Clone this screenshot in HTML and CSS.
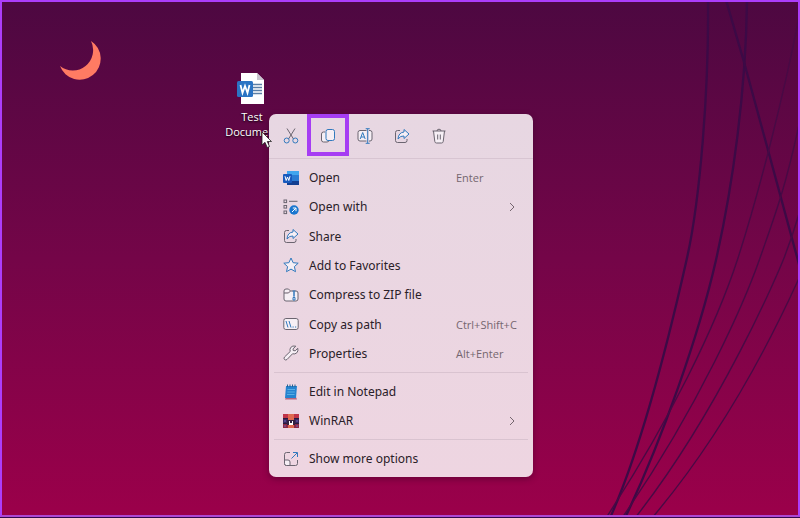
FILE: index.html
```
<!DOCTYPE html>
<html lang="en">

<head>
    <meta charset="UTF-8">
    <meta name="viewport" content="width=device-width, initial-scale=1.0">
    <title>Desktop</title>
    <link rel="stylesheet" href="styles.css">
</head>

<body>
    <main class="desktop">
        <svg class="wallpaper" viewBox="0 0 800 518" preserveAspectRatio="xMaxYMin slice" aria-hidden="true">
            <g fill="none" stroke="#3c0a46" stroke-width="2.300">
                <path d="M708 0C709 90 700 200 687 258S645 440 610 518" />
                <path d="M747 0C746 90 733 185 716 260S662 440 625 518" />
                <path d="M726 0L744 62L768 150L800 268" />
            </g>
            <g fill="none" stroke="#480a45" stroke-width="1.400">
                <path d="M800 12C785 90 760 190 738 258S670 420 606 518" />
                <path d="M800 120C785 190 775 215 760 258S700 405 622 518" />
                <path d="M800 210C793 235 789 245 784 258S720 410 635 518" />
                <path d="M800 276Q735 420 652 518" />
            </g>
        </svg>
        <svg class="moon" viewBox="59 40 43 41" aria-hidden="true">
            <path d="M91 41A21 21 0 1 1 60 66A20.4 20.4 0 0 0 91 41Z" fill="#ff7b63" />
        </svg>

        <button class="file">
            <svg width="32" height="34" viewBox="0 0 32 34" aria-hidden="true">
                <path d="M5 1H21L28 8V32H5Z" fill="#fff" />
                <path d="M21 1V8H28Z" fill="#c9c5cf" />
                <path d="M17 12.500H26M17 15.500H26M17 18.500H26M17 21.500H26" stroke="#5b7fa6" stroke-width="1.300" />
                <rect x="1" y="9" width="16" height="16" rx="1.500" fill="#2b74c4" />
                <path d="M4.500 13L6.500 21L9 14L11.500 21L13.500 13" fill="none" stroke="#fff" stroke-width="1.800" />
            </svg>
            <span>Test Document</span>
        </button>

        <div class="menu" role="menu">
            <div class="toolbar">
                <button aria-label="Cut">
                    <svg viewBox="0 0 16 16">
                        <path class="grey" d="M4 .5L10.500 11M12 .5L5.500 11" />
                        <circle class="blue" cx="3.700" cy="12.500" r="2.500" />
                        <circle class="blue" cx="12.300" cy="12.500" r="2.500" />
                    </svg>
                </button>
                <button class="marked" aria-label="Copy">
                    <svg viewBox="0 0 16 16">
                        <path class="grey fill" d="M5 4H3.500Q1.500 4 1.500 6V12Q1.500 14 3.500 14H7Q9 14 9.500 12" />
                        <rect class="blue fill" x="6" y="1.500" width="8.500" height="11" rx="2" />
                    </svg>
                    <span class="mark"></span>
                </button>
                <button aria-label="Rename">
                    <svg viewBox="0 0 16 16">
                        <path class="grey fill" d="M9.500 2.500H3Q1 2.500 1 4.500V11Q1 13 3 13H9.500M12 2.500H13Q15 2.500 15 4.500V11Q15 13 13 13H12" />
                        <path class="blue" d="M3.200 11L5.700 4.500L8.200 11M4 9H7.400M10.700 1V15M8.700 .7H12.700M8.700 15.300H12.700" />
                    </svg>
                </button>
                <button aria-label="Share">
                    <svg viewBox="0 0 16 16">
                        <path class="grey" d="M6 2.500H3.500Q1.500 2.500 1.500 4.500V12.500Q1.500 14.500 3.500 14.500H11Q13 14.500 13 12.500V11" />
                        <path class="blue fill" d="M10 1.500L15 6L10 10.500V8Q6.500 7.500 4 11Q4.500 4.500 10 4Z" />
                    </svg>
                </button>
                <button aria-label="Delete">
                    <svg viewBox="0 0 16 16">
                        <path class="grey fill" d="M2.500 3L3.800 13.500Q4 15 5.500 15H10.500Q12 15 12.200 13.500L13.500 3" />
                        <path class="grey" d="M1.500 3H14.500M6 3Q6 1.200 8 1.200T10 3M6.700 6.500V11.500M9.300 6.500V11.500" />
                    </svg>
                </button>
            </div>

            <div class="group group-main">
                <button class="item" role="menuitem">
                    <svg viewBox="0 0 16 16">
                        <rect x="4" y="1" width="12" height="14" rx="1" fill="#2b7cd3" />
                        <path d="M4 1H16V5H4Z" fill="#41a5ee" />
                        <path d="M4 11H16V15H4Z" fill="#123f91" />
                        <rect y="4" width="9" height="9" rx="1" fill="#185abd" />
                        <path d="M2 6.200L3.200 10.500L4.500 7L5.800 10.500L7 6.200" fill="none" stroke="#fff" />
                    </svg>
                    <span>Open</span>
                    <kbd>Enter</kbd>
                </button>
                <button class="item" role="menuitem">
                    <svg viewBox="0 0 16 16">
                        <g class="grey">
                            <rect x="1" y="1" width="2.600" height="2.600" />
                            <rect x="1" y="6.500" width="2.600" height="2.600" />
                            <rect x="1" y="12" width="2.600" height="2.600" />
                            <path d="M6 2.300H14.500" />
                        </g>
                        <circle cx="11" cy="11" r="4.700" fill="#1976cf" />
                        <path d="M9 13L12.800 9.200M9.800 9H13V12.200" fill="none" stroke="#fff" />
                    </svg>
                    <span>Open with</span>
                    <svg class="chevron" viewBox="0 0 12 12"><path d="M4 2L8 6L4 10" /></svg>
                </button>
                <button class="item" role="menuitem">
                    <svg viewBox="0 0 16 16">
                        <path class="grey" d="M6 2.500H3.500Q1.500 2.500 1.500 4.500V12.500Q1.500 14.500 3.500 14.500H11Q13 14.500 13 12.500V11" />
                        <path class="blue fill" d="M10 1.500L15 6L10 10.500V8Q6.500 7.500 4 11Q4.500 4.500 10 4Z" />
                    </svg>
                    <span>Share</span>
                </button>
                <button class="item" role="menuitem">
                    <svg viewBox="0 0 16 16">
                        <path class="blue fill" d="M8 1L10.100 5.700L15.200 6.200L11.400 9.600L12.500 14.700L8 12.100L3.500 14.700L4.600 9.600L.8 6.200L5.900 5.700Z" />
                    </svg>
                    <span>Add to Favorites</span>
                </button>
                <button class="item" role="menuitem">
                    <svg viewBox="0 0 16 16">
                        <path class="grey fill" d="M1 4Q1 2 3 2H5.500L7.500 4H13Q15 4 15 6V12Q15 14 13 14H3Q1 14 1 12ZM1 6H5.500L7.500 4" />
                        <path class="blue" d="M9.500 4H12.500M11 4V11M10 6H12M10 8H12M10 10.500H12V13H10Z" />
                    </svg>
                    <span>Compress to ZIP file</span>
                </button>
                <button class="item" role="menuitem">
                    <svg viewBox="0 0 16 16">
                        <rect class="grey fill" x=".8" y="2.500" width="14.400" height="11" rx="2" />
                        <path class="blue" d="M3 5L5 11.500M6 5L8 11.500M9.500 11H10.700M12 11H13.200" />
                    </svg>
                    <span>Copy as path</span>
                    <kbd>Ctrl+Shift+C</kbd>
                </button>
                <button class="item" role="menuitem">
                    <svg viewBox="0 0 16 16">
                        <path class="grey fill" d="M12.800 1.200Q9.500 .2 7.700 2.500Q6.500 4.200 7.200 6.500L1.500 12Q.5 13.200 1.500 14.500Q2.800 15.500 4 14.500L9.500 8.800Q12 9.500 13.800 7.800Q15.500 6 14.800 3.300L12.200 5.800L10.200 5.500L10 3.800Z" />
                    </svg>
                    <span>Properties</span>
                    <kbd>Alt+Enter</kbd>
                </button>
            </div>

            <div class="group">
                <button class="item" role="menuitem">
                    <svg viewBox="0 0 16 16">
                        <path d="M3 13H13L14 15.500H2Z" fill="#b5667e" />
                        <path d="M3 2H14L13 14H2Z" fill="#2583cf" />
                        <path d="M4.500 .5V3M7 .5V3M9.500 .5V3M12 .5V3" stroke="#27618f" />
                        <path d="M4.500 5.500H12M4.300 8H11.800M4 10.500H11.500" stroke="#58aee5" />
                    </svg>
                    <span>Edit in Notepad</span>
                </button>
                <button class="item" role="menuitem">
                    <svg viewBox="0 0 16 16">
                        <path d="M0 1H16V6H0Z" fill="#bf3348" />
                        <path d="M0 6H16V10H0Z" fill="#3a2860" />
                        <path d="M0 10H16V15H0Z" fill="#8a2846" />
                        <path d="M0 5.500H16M0 10.500H16" stroke="#281b3b" />
                        <path d="M5 1H11V15H5Z" fill="#df694f" />
                        <path d="M4 7H12V12H4Z" fill="#332141" />
                        <path d="M6 8H7V10H9V8H10V12H6Z" fill="#fff" />
                        <path d="M1 8H3M13 8H15M1 13H3M13 13H15" stroke="#6c68be" />
                    </svg>
                    <span>WinRAR</span>
                    <svg class="chevron" viewBox="0 0 12 12"><path d="M4 2L8 6L4 10" /></svg>
                </button>
            </div>

            <div class="group">
                <button class="item" role="menuitem">
                    <svg viewBox="0 0 16 16">
                        <path class="grey" d="M7 1.500H3.500Q1.500 1.500 1.500 3.500V12.500Q1.500 14.500 3.500 14.500H12.500Q14.500 14.500 14.500 12.500V9" />
                        <path class="grey fill" d="M1.500 9H5Q7 9 7 11V14.500H3.500Q1.500 14.500 1.500 12.500Z" />
                        <path class="blue" d="M8.500 7.500L14 2M10 1.500H14.500V6" />
                    </svg>
                    <span>Show more options</span>
                </button>
            </div>
        </div>

        <svg class="cursor" viewBox="0 0 12 18" aria-hidden="true">
            <path d="M1 1V14L4 11.300L6.200 16.500L8.500 15.500L6.300 10.500H10.500Z" fill="#fff" stroke="#222" stroke-width=".8" />
        </svg>
    </main>
</body>

</html>
```
FILE: styles.css
```
* {
    box-sizing: border-box;
}

body {
    margin: 0;
    padding-bottom: 1px;
    background-color: #35084f;
    font-family: "Noto Sans", "Open Sans", sans-serif;
    font-size: 12px;
    color: #2a2028;
}

button {
    padding: 0;
    border: none;
    background: none;
    font: inherit;
    color: inherit;
}

.desktop {
    position: relative;
    min-height: calc(100vh - 1px);
    overflow: hidden;
    border: 2px solid #ac3dfa;
    border-bottom-color: #ad48d2;
    background: linear-gradient(#4d0841, #740548 50%, #9b004a);
}

.wallpaper {
    position: absolute;
    top: -2px;
    right: -2px;
    width: calc(100% + 4px);
    height: calc(100% + 3px);
}

.moon {
    position: absolute;
    top: 38px;
    left: 57px;
    width: 43px;
    height: 41px;
}

/* Desktop shortcut */
.file {
    position: absolute;
    top: 70px;
    left: 220px;
    width: 60px;
    display: flex;
    flex-direction: column;
    align-items: center;
    gap: 3px;
    font-family: "Open Sans", sans-serif;
    font-size: 11px;
    line-height: 15px;
    color: #fff;
    text-shadow: 0 1px 2px #000;
}

/* Context menu */
.menu {
    position: absolute;
    top: 112px;
    left: 267px;
    width: 264px;
    border-radius: 7px;
    background: linear-gradient(#e7d7e2, #eed5e1);
    box-shadow: 0 2px 6px rgba(40, 0, 30, 0.4);
}

.toolbar {
    display: flex;
    gap: 1px;
    height: 45px;
    padding: 0 4px;
    border-bottom: 1px solid #d8c5d2;
}

.toolbar button {
    position: relative;
    display: flex;
    align-items: center;
    justify-content: center;
    width: 36px;
}

.menu svg {
    width: 16px;
    height: 16px;
}

.mark {
    position: absolute;
    top: 0;
    left: -3px;
    width: 42px;
    height: 42px;
    border: 4px solid #a63df3;
}

.group {
    display: flex;
    flex-direction: column;
    margin: 0 5px;
    padding: 4px 0;
}

.group + .group {
    border-top: 1px solid #d9c3d0;
}

.group-main {
    height: 213px;
    justify-content: space-between;
}

.item {
    display: grid;
    grid-template-columns: 16px 1fr 62px;
    column-gap: 10px;
    align-items: center;
    height: 29px;
    padding: 0 10px 0 9px;
    text-align: left;
    white-space: nowrap;
}

.item kbd {
    font-family: "Open Sans", sans-serif;
    font-size: 11px;
    color: #75666f;
}

.item .chevron {
    width: 12px;
    height: 12px;
    justify-self: end;
}

.chevron path {
    fill: none;
    stroke: #75666f;
}

.grey {
    fill: none;
    stroke: #6b6570;
}

.blue {
    fill: none;
    stroke: #3179bd;
}

.fill {
    fill: #f6eff5;
}

.cursor {
    position: absolute;
    top: 129px;
    left: 259px;
    width: 12px;
    height: 18px;
}
```
